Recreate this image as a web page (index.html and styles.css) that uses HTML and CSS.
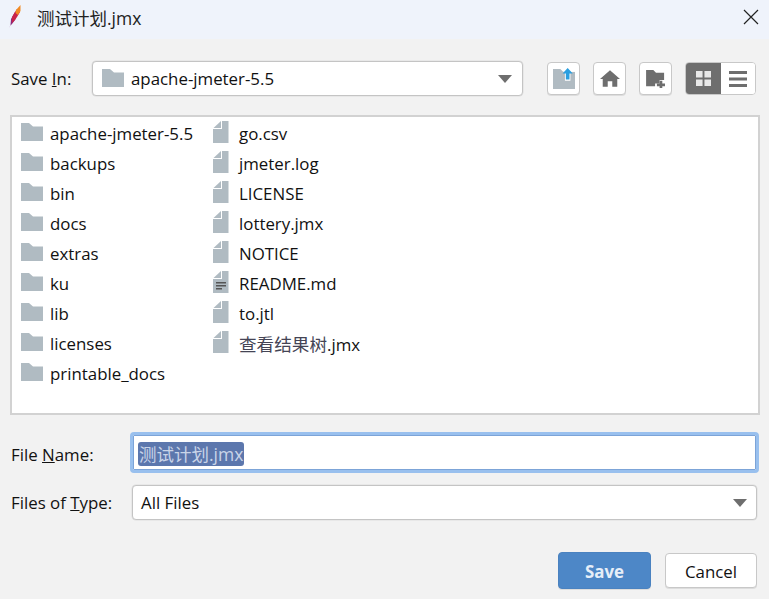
FILE: index.html
```html
<!DOCTYPE html>
<html lang="en">
<head>
<meta charset="utf-8">
<title>测试计划.jmx</title>
<link rel="stylesheet" href="styles.css">
</head>
<body>
<svg class="defs" width="0" height="0" aria-hidden="true">
  <symbol id="folder" viewBox="0 0 22 18"><path d="M0 0H8L12 3.500H22V18H0Z" fill="#b0bbc2"/></symbol>
  <symbol id="file" viewBox="0 0 16 22"><path d="M9 0H15.500V22H0V8H9Z" fill="#b0bbc2"/><path d="M8 0V7H0.500Z" fill="#b0bbc2"/></symbol>
  <symbol id="doc" viewBox="0 0 16 22"><path d="M9 0H15.500V22H0V8H9Z" fill="#b0bbc2"/><path d="M8 0V7H0.500Z" fill="#b0bbc2"/><path d="M3 11H13V12.500H3ZM3 14H13V15.500H3ZM3 17H9V18.500H3Z" fill="#555"/></symbol>
</svg>
<div class="dialog">
  <header class="titlebar">
    <svg class="feather" viewBox="0 0 14 26" width="14" height="26"><path d="M1 23.500L2.500 20L3 14L7 7L9 10L7 15L4 19L2 21Z" fill="#8a2a7c"/><path d="M4 12L7 7L9 4L12 7L9 12L7 15L4 18Z" fill="#c8234a"/><path d="M8 5L12.500 0L12.500 6L10 10L7.500 8Z" fill="#f08a24"/></svg>
    <span class="title">测试计划.jmx</span>
    <svg class="close" viewBox="0 0 16 16" width="16" height="16"><path d="M1 1L15 15M15 1L1 15" stroke="#222" stroke-width="1.200" fill="none"/></svg>
  </header>
  <main class="content">
    <div class="toolbar">
      <label class="label save-label">Save <u>I</u>n:</label>
      <div class="combo path-combo">
        <svg class="ico-folder"><use href="#folder"/></svg>
        <span class="combo-text">apache-jmeter-5.5</span>
        <span class="arrow"></span>
      </div>
      <div class="tools">
        <button class="tool" type="button" aria-label="Up one level">
          <svg viewBox="0 0 24 24" width="22" height="22"><path d="M0 1H8L11 4H24V23H0Z" fill="#b0bbc2"/><path d="M11 4H13V14H19V4H24V1H19Z" fill="#fff"/><path d="M16 0L21.500 6H18V12.500H14V6H10.500Z" fill="#2a9fe0"/></svg>
        </button>
        <button class="tool" type="button" aria-label="Home">
          <svg viewBox="0 0 22 18" width="20" height="17"><path d="M11 0L22 9.500H19V18H13.500V12H8.500V18H3V9.500H0Z" fill="#6e6e6e"/></svg>
        </button>
        <button class="tool" type="button" aria-label="New folder">
          <svg viewBox="0 0 22 20" width="20" height="18"><path d="M0 0H8L11 3H20V11H15V15H10V18H0Z" fill="#6e6e6e"/><path d="M15 12H18V15H21V18H18V21H15V18H12V15H15Z" fill="#6e6e6e"/></svg>
        </button>
        <div class="toggle">
          <button class="view on" type="button" aria-label="List">
            <svg viewBox="0 0 16 16" width="15" height="15"><path d="M0 0H7V7H0ZM9 0H16V7H9ZM0 9H7V16H0ZM9 9H16V16H9Z" fill="#e8e8e8"/></svg>
          </button>
          <button class="view" type="button" aria-label="Details">
            <svg viewBox="0 0 18 16" width="18" height="16"><path d="M0 0H18V3H0ZM0 6.500H18V9.500H0ZM0 13H18V16H0Z" fill="#6e6e6e"/></svg>
          </button>
        </div>
      </div>
    </div>
    <section class="list">
      <ul class="col col-dirs">
        <li><svg class="ico-folder"><use href="#folder"/></svg>apache-jmeter-5.5</li>
        <li><svg class="ico-folder"><use href="#folder"/></svg>backups</li>
        <li><svg class="ico-folder"><use href="#folder"/></svg>bin</li>
        <li><svg class="ico-folder"><use href="#folder"/></svg>docs</li>
        <li><svg class="ico-folder"><use href="#folder"/></svg>extras</li>
        <li><svg class="ico-folder"><use href="#folder"/></svg>ku</li>
        <li><svg class="ico-folder"><use href="#folder"/></svg>lib</li>
        <li><svg class="ico-folder"><use href="#folder"/></svg>licenses</li>
        <li><svg class="ico-folder"><use href="#folder"/></svg>printable_docs</li>
      </ul>
      <ul class="col col-files">
        <li><svg class="ico-file"><use href="#file"/></svg>go.csv</li>
        <li><svg class="ico-file"><use href="#file"/></svg>jmeter.log</li>
        <li><svg class="ico-file"><use href="#file"/></svg>LICENSE</li>
        <li><svg class="ico-file"><use href="#file"/></svg>lottery.jmx</li>
        <li><svg class="ico-file"><use href="#file"/></svg>NOTICE</li>
        <li><svg class="ico-file"><use href="#doc"/></svg>README.md</li>
        <li><svg class="ico-file"><use href="#file"/></svg>to.jtl</li>
        <li><svg class="ico-file"><use href="#file"/></svg><span><span class="cjk">查看结果树</span>.jmx</span></li>
      </ul>
    </section>
    <div class="form">
      <label class="label name-label">File <u>N</u>ame:</label>
      <div class="name-field"><span class="selected">测试计划.jmx</span></div>
      <label class="label">Files of <u>T</u>ype:</label>
      <div class="combo type-combo"><span class="combo-text">All Files</span><span class="arrow"></span></div>
    </div>
    <div class="actions">
      <button class="btn primary" type="button">Save</button>
      <button class="btn" type="button">Cancel</button>
    </div>
  </main>
</div>
</body>
</html>
```
FILE: styles.css
```css
* { box-sizing: border-box; }
html, body { margin: 0; padding: 0; }
body {
  width: 769px;
  height: 599px;
  overflow: hidden;
  background: #f2f2f2;
  color: #111;
  font-family: "Open Sans", "Noto Sans CJK SC", sans-serif;
  font-size: 16.850px;
}
.defs { display: block; height: 0; }
.dialog { display: flex; flex-direction: column; height: 599px; }
.titlebar {
  height: 39px;
  flex: none;
  display: flex;
  align-items: center;
  padding: 0 10px 0 8px;
  background: #eff3fb;
}
.feather { flex: none; margin-right: 15px; margin-top: -4px; }
.title { flex: 1; font-size: 17.500px; color: #222; margin-top: -4px; }
.close { flex: none; margin-top: -5px; }
.content { flex: 1; display: flex; flex-direction: column; padding: 0 9px 0 10px; }
.toolbar { display: flex; align-items: center; height: 35px; margin-top: 22px; }
.label { color: #111; padding-left: 1px; }
.save-label { width: 82px; flex: none; }
.name-label { margin-top: 3px; }
.combo {
  display: flex;
  align-items: center;
  background: #fff;
  border: 1px solid #c4c4c4;
  border-radius: 4px;
  box-shadow: 0 0 0 0.500px #ddd;
}
.path-combo { width: 431px; height: 35px; padding: 0 10px 0 9px; flex: none; }
.type-combo { height: 35px; padding: 0 9px 0 8px; margin: 0 3px 0 2px; }
.path-combo .ico-folder { margin-right: 7px; margin-top: -2px; }
.combo-text { flex: 1; }
.arrow {
  width: 0;
  height: 0;
  border-left: 7px solid transparent;
  border-right: 7px solid transparent;
  border-top: 8px solid #6e6e6e;
}
.ico-folder { width: 22px; height: 18px; flex: none; }
.ico-file { width: 16px; height: 22px; flex: none; margin-top: -2px; }
.tools { display: flex; align-items: center; margin-left: 24px; }
.tool {
  width: 33px;
  height: 33px;
  padding: 0;
  margin-right: 13px;
  display: flex;
  align-items: center;
  justify-content: center;
  background: #fff;
  border: 1px solid #c8c8c8;
  border-radius: 4px;
  box-shadow: 0 1px 0 #ddd;
}
.toggle {
  width: 71px;
  height: 33px;
  display: flex;
  border: 1px solid #c8c8c8;
  border-radius: 4px;
  overflow: hidden;
  background: #fff;
}
.view {
  flex: 1;
  padding: 0;
  border: 0;
  background: #fff;
  display: flex;
  align-items: center;
  justify-content: center;
}
.view.on { background: #6e6e6e; flex: none; width: 35px; }
.list {
  height: 300px;
  margin-top: 19px;
  display: flex;
  align-items: flex-start;
  background: #fff;
  border: 2px solid #d2d2d2;
  padding: 1px 0 0 9px;
}
.col { list-style: none; margin: 0; padding: 0; }
.col li { height: 30px; display: flex; align-items: center; white-space: nowrap; }
.col-dirs { width: 192px; }
.col-dirs .ico-folder { margin-right: 7px; margin-top: -3px; }
.col-files .ico-file { margin-right: 10px; }
.cjk { color: #445; font-size: 17.600px; }
.form {
  display: grid;
  grid-template-columns: 120px 1fr;
  grid-template-rows: 41px 35px;
  row-gap: 12px;
  align-items: center;
  margin-top: 17px;
}
.name-field {
  height: 41px;
  padding: 7px 0 0 5px;
  background: #fff;
  border: 3px solid #99c0ee;
  outline: 1px solid #7ca4d8;
  outline-offset: -4px;
  border-radius: 4px;
  width: 629px;
}
.selected {
  display: inline-block;
  height: 24px;
  line-height: 24px;
  padding: 0 1px;
  background: #5c77ad;
  color: #c9d4e8;
  border-radius: 3px;
  font-size: 17.500px;
}
.actions { display: flex; justify-content: flex-end; gap: 14px; margin: 32px 3px 0 0; align-items: center; }
.btn {
  width: 92px;
  height: 35px;
  padding: 2px 0 0;
  font: inherit;
  color: #111;
  background: #fff;
  border: 1px solid #c8c8c8;
  border-radius: 4px;
  box-shadow: 0 1px 0 #ddd;
}
.btn.primary {
  width: 93px;
  height: 37px;
  background: #4d87c7;
  border-color: #4a82c0;
  color: #e6eef8;
  font-weight: 700;
}
```
